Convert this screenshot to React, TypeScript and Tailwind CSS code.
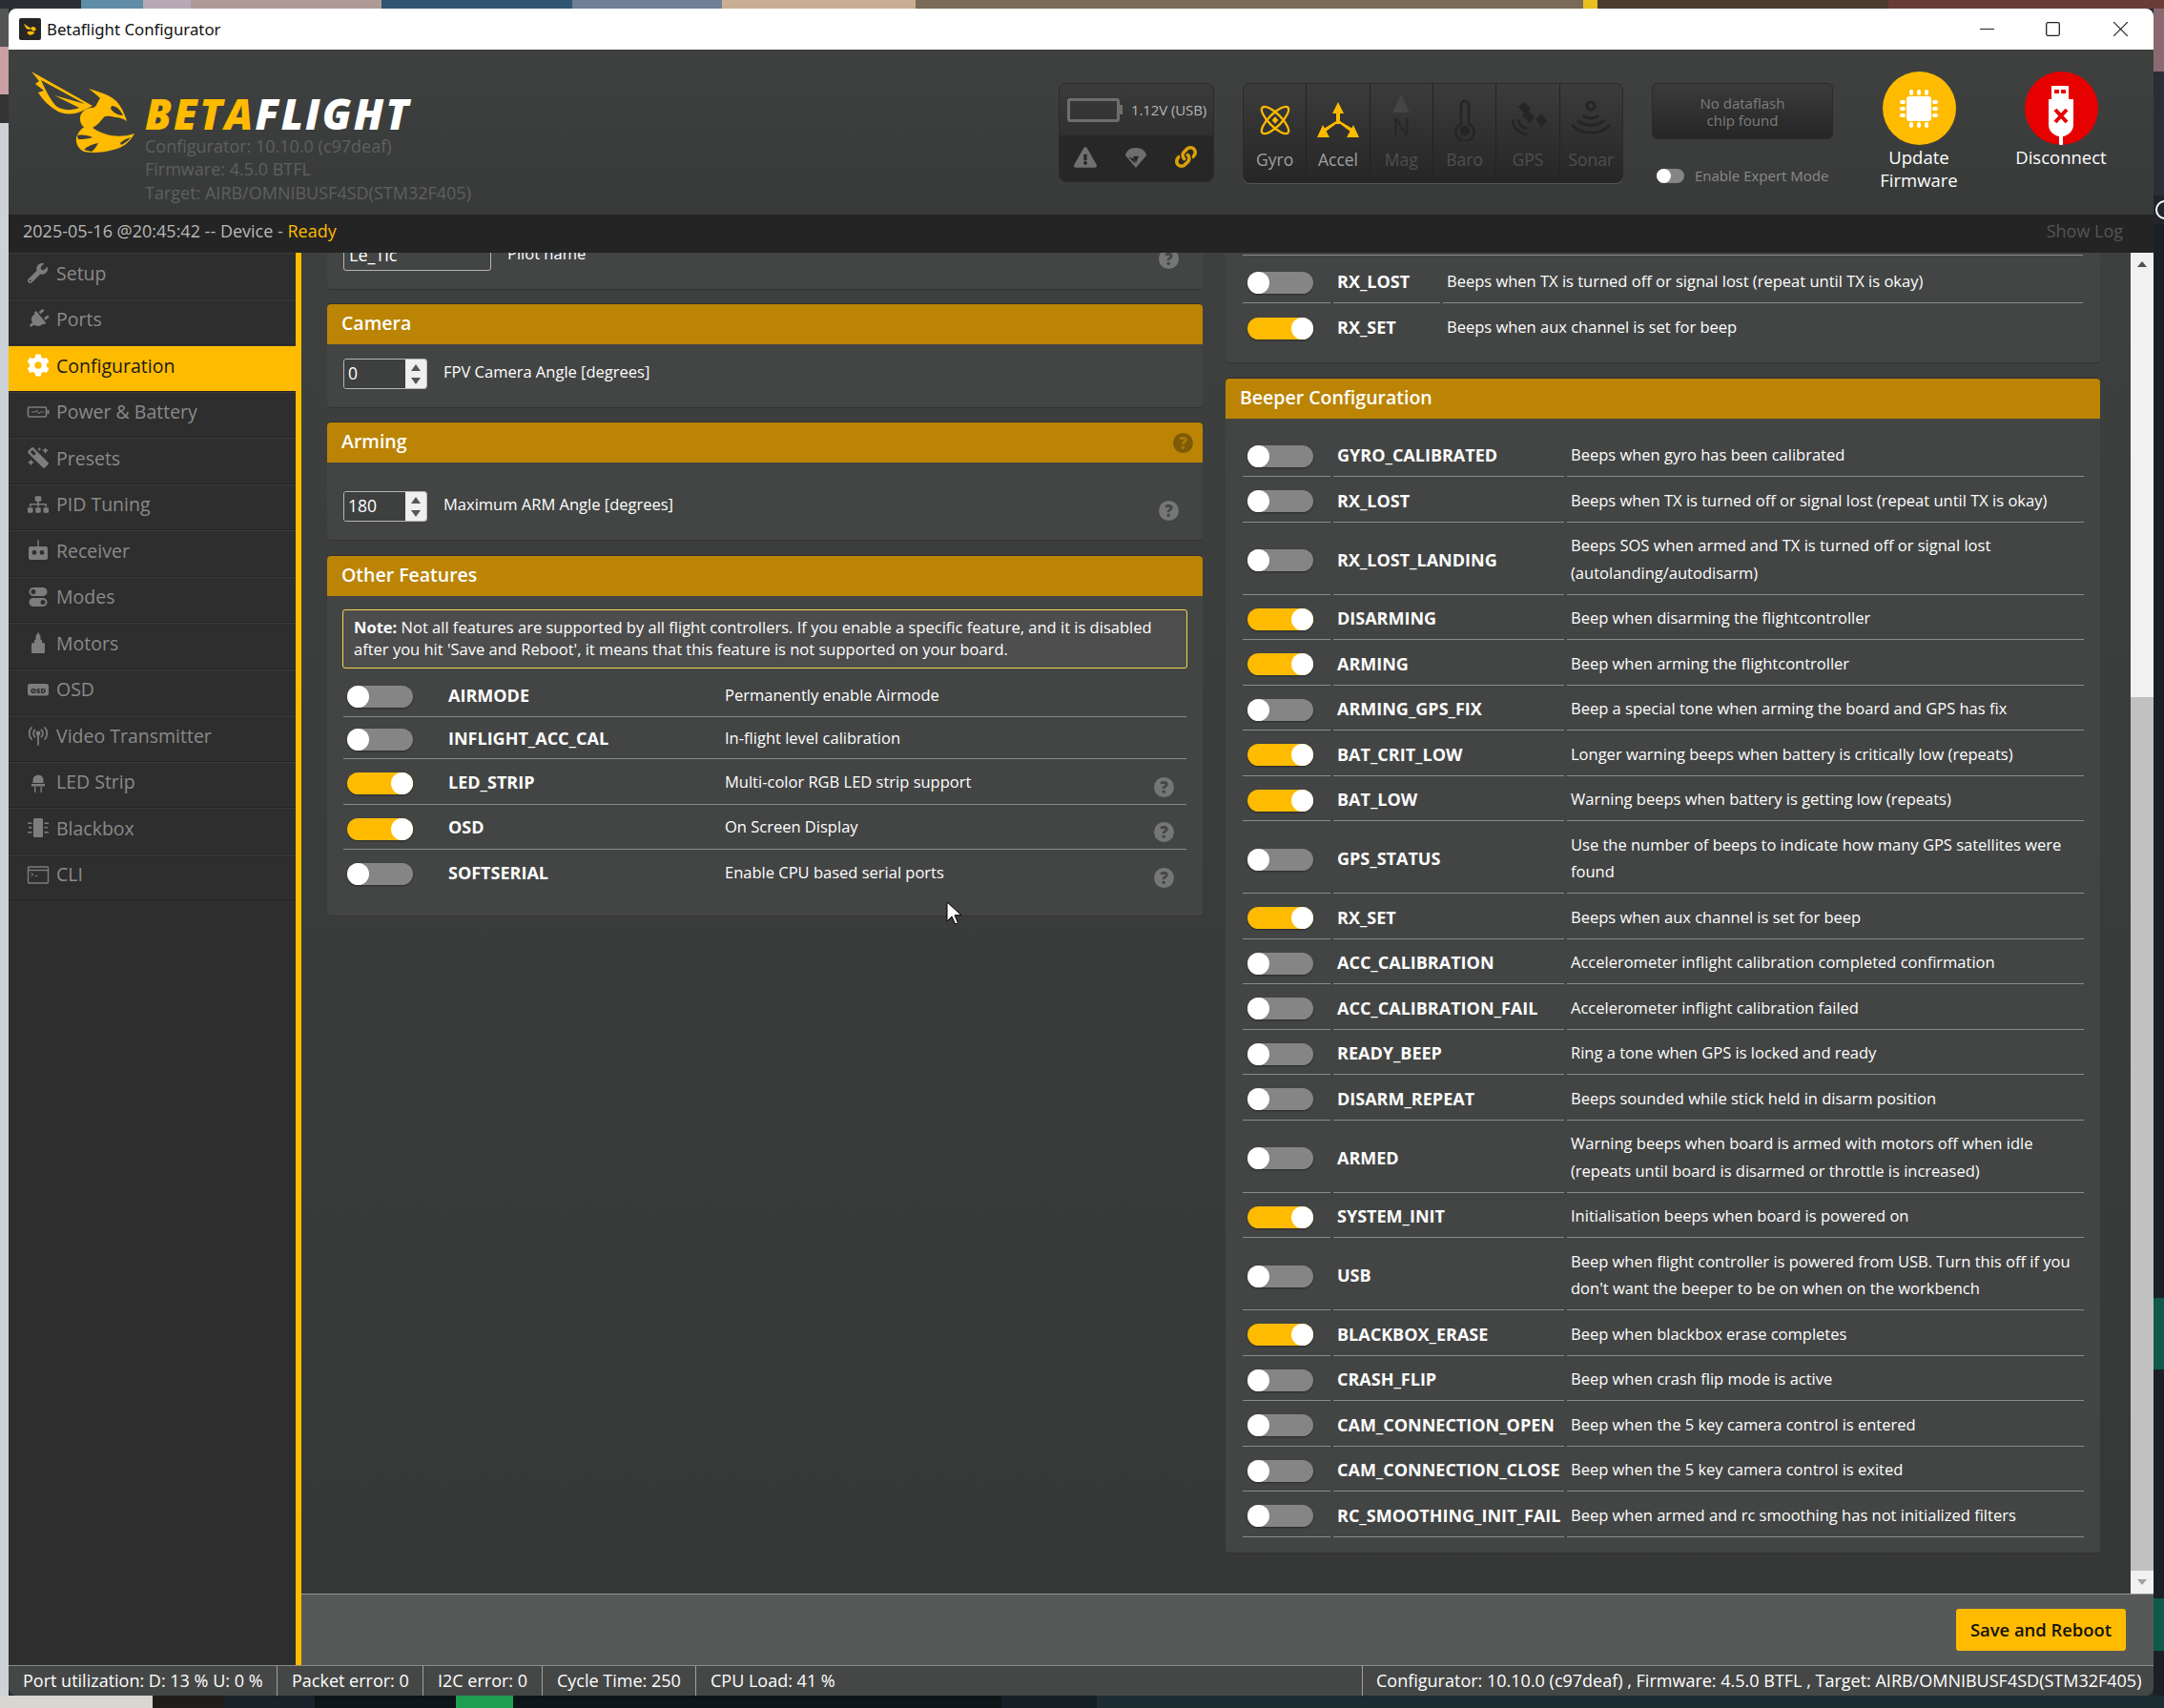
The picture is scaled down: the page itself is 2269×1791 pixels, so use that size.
import type { ReactNode } from 'react'
import { FaWrench, FaPlug, FaCog, FaMagic, FaSitemap, FaExclamationTriangle, FaLink } from 'react-icons/fa'

const topStrip = [
  ['w-[85px]', 'bg-[#2b2f35]'],
  ['w-[65px]', 'bg-[#5f8da6]'],
  ['w-[50px]', 'bg-[#b8a8b5]'],
  ['w-[200px]', 'bg-[#b09a98]'],
  ['w-[200px]', 'bg-[#2f5570]'],
  ['w-[157px]', 'bg-[#6d8094]'],
  ['w-[203px]', 'bg-[#c8ae92]'],
  ['w-[700px]', 'bg-[#7a6a58]'],
  ['w-[15px]', 'bg-[#e8c020]'],
  ['w-[305px]', 'bg-[#4a3a30]'],
  ['flex-1', 'bg-[#6a3c38]'],
]

const bottomStrip = [
  ['w-[160px]', 'bg-[#d9d6d0]'],
  ['w-[75px]', 'bg-[#201d1b]'],
  ['w-[95px]', 'bg-[#18222a]'],
  ['w-[148px]', 'bg-[#0c1518]'],
  ['w-[60px]', 'bg-[#1f9e50]'],
  ['w-[512px]', 'bg-[#0c1518]'],
  ['w-[100px]', 'bg-[#141f26]'],
  ['flex-1', 'bg-[#1e2c33]'],
]

function BatteryIcon() {
  return (
    <svg viewBox="0 0 24 24" className="w-[24px] h-[24px]" fill="none" stroke="currentColor" strokeWidth="1.6">
      <rect x="1.5" y="7" width="19" height="10" rx="1" />
      <path d="M22.5 10v4" strokeWidth="2" />
      <path d="M5 12h4l1.5-2 2 4 1.5-2h4" strokeWidth="1" />
    </svg>
  )
}

function RemoteIcon() {
  return (
    <svg viewBox="0 0 24 24" className="w-[24px] h-[24px]" fill="currentColor">
      <rect x="11.3" y="1" width="1.4" height="8" />
      <path fillRule="evenodd" d="M4 8h16a2 2 0 0 1 2 2v10a2 2 0 0 1-2 2H4a2 2 0 0 1-2-2V10a2 2 0 0 1 2-2zM8 12a2.4 2.4 0 1 0 0 4.8A2.4 2.4 0 0 0 8 12zm8 0a2.4 2.4 0 1 0 0 4.8 2.4 2.4 0 0 0 0-4.8z" />
    </svg>
  )
}

function ModesIcon() {
  return (
    <svg viewBox="0 0 24 24" className="w-[24px] h-[24px]" fill="currentColor">
      <path fillRule="evenodd" d="M7 2h10a4.5 4.5 0 0 1 0 9H7a4.5 4.5 0 0 1 0-9zm0 2a2.5 2.5 0 1 0 0 5 2.5 2.5 0 0 0 0-5z" />
      <path fillRule="evenodd" d="M7 13h10a4.5 4.5 0 0 1 0 9H7a4.5 4.5 0 0 1 0-9zm10 2a2.5 2.5 0 1 0 0 5 2.5 2.5 0 0 0 0-5z" />
    </svg>
  )
}

function MotorIcon() {
  return (
    <svg viewBox="0 0 24 24" className="w-[24px] h-[24px]" fill="currentColor">
      <path d="M12 1l2.5 4v4h1.5v3H8V9h1.5V5z" />
      <rect x="5" y="12" width="14" height="11" rx="1.5" />
    </svg>
  )
}

function OsdIcon() {
  return (
    <svg viewBox="0 0 24 24" className="w-[24px] h-[24px]">
      <rect x="1" y="6" width="22" height="12.5" rx="2.5" fill="currentColor" />
      <text x="12" y="15.5" textAnchor="middle" fontSize="7.5" fontWeight="800" fill="#2e2e2e">OSD</text>
    </svg>
  )
}

function VtxIcon() {
  return (
    <svg viewBox="0 0 24 24" className="w-[24px] h-[24px]" fill="none" stroke="currentColor" strokeWidth="1.8" strokeLinecap="round">
      <circle cx="12" cy="10" r="1.5" fill="currentColor" />
      <path d="M12 11v11" />
      <path d="M8.5 6.5a5 5 0 0 0 0 7M15.5 6.5a5 5 0 0 1 0 7M5 4a9 9 0 0 0 0 12M19 4a9 9 0 0 1 0 12" />
    </svg>
  )
}

function LedIcon() {
  return (
    <svg viewBox="0 0 24 24" className="w-[24px] h-[24px]" fill="currentColor">
      <path d="M6.5 10a5.5 5.5 0 0 1 11 0v3h-11z" />
      <rect x="5" y="14" width="14" height="2.5" />
      <rect x="8" y="17" width="1.4" height="6" />
      <rect x="14.5" y="17" width="1.4" height="6" />
    </svg>
  )
}

function BlackboxIcon() {
  return (
    <svg viewBox="0 0 24 24" className="w-[24px] h-[24px]" fill="currentColor">
      <rect x="7" y="2" width="10" height="20" rx="1.5" />
      <path d="M1 6.500h4.500v1.500H1zM2 11h3.500v1.500H2zM1 16h4.500v1.500H1zM18.500 6.500H23v1.500h-4.500zM18.500 11H22v1.500h-3.500zM18.500 16H23v1.500h-4.500z" />
    </svg>
  )
}

function CliIcon() {
  return (
    <svg viewBox="0 0 24 24" className="w-[24px] h-[24px]" fill="none" stroke="currentColor" strokeWidth="1.4">
      <rect x="1.5" y="4" width="21" height="17" rx="1" />
      <path d="M1.5 7.500h21" />
      <path d="M4.500 10.500l2.500 1.500-2.500 1.500M8.500 13.500h3" strokeWidth="1" />
    </svg>
  )
}

const tabs: { label: string; icon: ReactNode; active?: boolean }[] = [
  { label: 'Setup', icon: <FaWrench size={21} /> },
  { label: 'Ports', icon: <FaPlug size={22} className="rotate-[50deg]" /> },
  { label: 'Configuration', icon: <FaCog size={24} />, active: true },
  { label: 'Power & Battery', icon: <BatteryIcon /> },
  { label: 'Presets', icon: <FaMagic size={22} className="-scale-x-100" /> },
  { label: 'PID Tuning', icon: <FaSitemap size={22} /> },
  { label: 'Receiver', icon: <RemoteIcon /> },
  { label: 'Modes', icon: <ModesIcon /> },
  { label: 'Motors', icon: <MotorIcon /> },
  { label: 'OSD', icon: <OsdIcon /> },
  { label: 'Video Transmitter', icon: <VtxIcon /> },
  { label: 'LED Strip', icon: <LedIcon /> },
  { label: 'Blackbox', icon: <BlackboxIcon /> },
  { label: 'CLI', icon: <CliIcon /> },
]

const beepers: { name: string; on?: boolean; desc: ReactNode; tall?: boolean }[] = [
  { name: 'GYRO_CALIBRATED', desc: 'Beeps when gyro has been calibrated' },
  { name: 'RX_LOST', desc: 'Beeps when TX is turned off or signal lost (repeat until TX is okay)' },
  { name: 'RX_LOST_LANDING', tall: true, desc: <>Beeps SOS when armed and TX is turned off or signal lost<br />(autolanding/autodisarm)</> },
  { name: 'DISARMING', on: true, desc: 'Beep when disarming the flightcontroller' },
  { name: 'ARMING', on: true, desc: 'Beep when arming the flightcontroller' },
  { name: 'ARMING_GPS_FIX', desc: 'Beep a special tone when arming the board and GPS has fix' },
  { name: 'BAT_CRIT_LOW', on: true, desc: 'Longer warning beeps when battery is critically low (repeats)' },
  { name: 'BAT_LOW', on: true, desc: 'Warning beeps when battery is getting low (repeats)' },
  { name: 'GPS_STATUS', tall: true, desc: <>Use the number of beeps to indicate how many GPS satellites were<br />found</> },
  { name: 'RX_SET', on: true, desc: 'Beeps when aux channel is set for beep' },
  { name: 'ACC_CALIBRATION', desc: 'Accelerometer inflight calibration completed confirmation' },
  { name: 'ACC_CALIBRATION_FAIL', desc: 'Accelerometer inflight calibration failed' },
  { name: 'READY_BEEP', desc: 'Ring a tone when GPS is locked and ready' },
  { name: 'DISARM_REPEAT', desc: 'Beeps sounded while stick held in disarm position' },
  { name: 'ARMED', tall: true, desc: <>Warning beeps when board is armed with motors off when idle<br />(repeats until board is disarmed or throttle is increased)</> },
  { name: 'SYSTEM_INIT', on: true, desc: 'Initialisation beeps when board is powered on' },
  { name: 'USB', tall: true, desc: <>Beep when flight controller is powered from USB. Turn this off if you<br />don't want the beeper to be on when on the workbench</> },
  { name: 'BLACKBOX_ERASE', on: true, desc: 'Beep when blackbox erase completes' },
  { name: 'CRASH_FLIP', desc: 'Beep when crash flip mode is active' },
  { name: 'CAM_CONNECTION_OPEN', desc: 'Beep when the 5 key camera control is entered' },
  { name: 'CAM_CONNECTION_CLOSE', desc: 'Beep when the 5 key camera control is exited' },
  { name: 'RC_SMOOTHING_INIT_FAIL', desc: 'Beep when armed and rc smoothing has not initialized filters' },
]

const features = [
  { name: 'AIRMODE', desc: 'Permanently enable Airmode', h: 'h-[46px]' },
  { name: 'INFLIGHT_ACC_CAL', desc: 'In-flight level calibration', h: 'h-[44px]' },
  { name: 'LED_STRIP', desc: 'Multi-color RGB LED strip support', on: true, help: true, h: 'h-[48px]' },
  { name: 'OSD', desc: 'On Screen Display', on: true, help: true, h: 'h-[47px]' },
  { name: 'SOFTSERIAL', desc: 'Enable CPU based serial ports', help: true, h: 'h-[47px]', last: true },
]

function Toggle({ on }: { on?: boolean }) {
  return (
    <div className={`w-[69px] h-[23px] rounded-full flex shrink-0 shadow-[0_1px_2px_rgba(0,0,0,0.4)] ${on ? 'bg-[#ffbb00] justify-end' : 'bg-[#858585] justify-start'}`}>
      <div className="w-[23px] h-[23px] rounded-full bg-white" />
    </div>
  )
}

function Help({ dark }: { dark?: boolean }) {
  return (
    <div className={`w-[21px] h-[21px] rounded-full flex items-center justify-center text-[17px] font-extrabold leading-none shrink-0 ${dark ? 'bg-[#7d5a05] text-[#a87a08]' : 'bg-[#757776] text-[#454746]'}`}>?</div>
  )
}

function PanelHeader({ title, children }: { title: string; children?: ReactNode }) {
  return (
    <div className="h-[42px] bg-[#bb8404] rounded-t-[4px] flex items-center justify-between pl-[15px] pr-[10px] shadow-[0_-1px_0_#2f2f2f]">
      <span className="text-[19.5px] leading-[24px] font-semibold text-white mt-[-3px]">{title}</span>
      {children}
    </div>
  )
}

function NumberInput({ value }: { value: string }) {
  return (
    <div className="w-[88px] h-[32px] border border-[#b5b5b5] rounded-[3px] flex overflow-hidden shrink-0">
      <div className="flex-1 pl-[4px] text-[17.5px] leading-[28px] text-white bg-[#3e403f]">{value}</div>
      <div className="w-[22px] bg-[#efefef] flex flex-col items-center justify-center gap-[7px]">
        <div className="w-0 h-0 border-x-[5px] border-x-transparent border-b-[7px] border-b-[#555]" />
        <div className="w-0 h-0 border-x-[5px] border-x-transparent border-t-[7px] border-t-[#555]" />
      </div>
    </div>
  )
}

function BeeLogo() {
  return (
    <svg viewBox="0 0 125 110" className="w-[125px] h-[110px] shrink-0" fill="#ffbb00">
      <path fillRule="evenodd" d="M8 10L72 46L62 51C52 56 42 55 36 52C27 47 20 40 15 32L21 30L12 23L16 20ZM18 19C24 32 29 42 35 47C42 51 50 51 58 48L32 35L64 44Z" />
      <path d="M68 28C76 30 84 33 90 36C100 41 105 52 108 62C103 59 100 58 96 58C90 57 86 56 84 58C80 62 78 66 72 69C66 72 60 68 59 61C58 54 64 48 72 48C76 48 77 42 80 38C76 34 72 31 68 28Z" />
      <path fillRule="evenodd" d="M92 46C97 46 101 50 104 56C98 56 94 53 91 49Z" fill="#3a3c3b" />
      <path d="M55 79C58 71 63 67 69 66C74 71 80 74 87 76C94 78 104 79 116 75C111 84 104 90 94 92C84 95 72 96 63 94C57 91 54 85 55 79Z" />
      <path d="M56 77C62 76 68 77 72 79C66 81 60 81 57 81ZM63 92C67 88 72 86 78 85C76 89 74 92 71 94ZM101 85C104 82 108 80 112 79C109 83 106 85 102 87Z" fill="#3a3c3b" />
    </svg>
  )
}

function SensorCell({ label, active, children }: { label: string; active?: boolean; children: ReactNode }) {
  return (
    <div className="flex-1 flex flex-col items-center border-r border-r-[#232323] last:border-r-0">
      <div className="h-[53px] mt-[11px] flex items-center justify-center">{children}</div>
      <span className={`mt-[3px] text-[17.5px] leading-[24px] ${active ? 'text-[#a0a0a0]' : 'text-[#4f4f4f]'}`}>{label}</span>
    </div>
  )
}

function Header() {
  return (
    <div className="h-[173px] bg-gradient-to-b from-[#3f4140] to-[#383a39] flex items-start pr-[37px] shrink-0">
      <div className="mt-[13px] ml-[16px]"><BeeLogo /></div>
      <div className="ml-[2px] mt-[46px]">
        <div className="text-[44px] leading-[43px] font-extrabold italic tracking-[2.2px] whitespace-nowrap">
          <span className="text-[#ffbb00]">BETA</span><span className="text-white">FLIGHT</span>
        </div>
        <div className="text-[18px] leading-[24.3px] text-[#5e605f]">
          <div>Configurator: 10.10.0 (c97deaf)</div>
          <div>Firmware: 4.5.0 BTFL</div>
          <div>Target: AIRB/OMNIBUSF4SD(STM32F405)</div>
        </div>
      </div>

      <div className="ml-auto mt-[35px] w-[163px] h-[104px] rounded-[8px] border border-[#2a2a2a] overflow-hidden flex flex-col">
        <div className="h-[54px] bg-gradient-to-b from-[#3b3b3b] to-[#303030] flex items-center pl-[8px]">
          <div className="w-[55px] h-[25px] border-[3px] border-[#6e6e6e] rounded-[3px]" />
          <div className="w-[3px] h-[10px] bg-[#6e6e6e]" />
          <span className="ml-[9px] text-[15px] text-[#b5b5b5] whitespace-nowrap tracking-[-0.1px]">1.12V (USB)</span>
        </div>
        <div className="flex-1 bg-[#272727] flex items-center justify-around pr-[2px] pb-[3px]">
          <FaExclamationTriangle size={24} className="text-[#707070]" />
          <svg viewBox="0 0 24 24" className="w-[24px] h-[24px]" fill="#6e6e6e">
            <path d="M12 2C6 2 1.5 5.5 1 10l11 13L23 10c-.5-4.5-5-8-11-8zM4 11.5l6 2 1.2 5zM20 11.5l-6 2-1.2 5zM9 11.2c1.8-.5 4.2-.5 6 0l-3 6.5z" />
          </svg>
          <FaLink size={23} className="text-[#d9a008]" />
        </div>
      </div>

      <div className="ml-[30px] mt-[35px] w-[399px] h-[105px] rounded-[8px] border border-[#2a2a2a] bg-gradient-to-b from-[#3c3c3c] to-[#262626] flex overflow-hidden shadow-[0_1px_0_#555]">
        <SensorCell label="Gyro" active>
          <svg viewBox="0 0 36 36" className="w-[34px] h-[34px]" fill="none" stroke="#ffbb00" strokeWidth="2.4">
            <ellipse cx="18" cy="18" rx="7" ry="20" transform="rotate(-45 18 18)" />
            <ellipse cx="18" cy="18" rx="7" ry="20" transform="rotate(45 18 18)" />
            <path d="M18 14l3.5 4-3.5 4-3.5-4z" fill="#ffbb00" stroke="none" />
          </svg>
        </SensorCell>
        <SensorCell label="Accel" active>
          <svg viewBox="0 0 44 38" className="w-[44px] h-[38px]" fill="#ffbb00">
            <path d="M22 0l6 12h-4v11h-4V12h-4z" />
            <path d="M21 22L9 31l-2.200-3L20 20zM23 22l12 9 2.200-3L24 20z" />
            <path d="M0 37l6-13 7 13zM44 37l-6-13-7 13z" />
          </svg>
        </SensorCell>
        <SensorCell label="Mag">
          <div className="flex flex-col items-center mt-[-4px]">
            <div className="w-0 h-0 border-x-[9px] border-x-transparent border-b-[19px] border-b-[#454545]" />
            <span className="text-[25px] leading-[30px] text-[#272727] font-['Liberation_Sans',sans-serif]">N</span>
          </div>
        </SensorCell>
        <SensorCell label="Baro">
          <svg viewBox="0 0 24 44" className="w-[24px] h-[44px]" fill="none" stroke="#252525" strokeWidth="2.5">
            <path d="M8 26V6a4 4 0 0 1 8 0v20a9.5 9.5 0 1 1-8 0z" />
            <circle cx="12" cy="33" r="4" fill="#252525" />
          </svg>
        </SensorCell>
        <SensorCell label="GPS">
          <svg viewBox="0 0 40 40" className="w-[40px] h-[40px]" fill="#252525">
            <path d="M10 6l6-5 7 7-6 6zM28 19l6-6 6 8-6 6z" />
            <path d="M19 9l8 8-5 6-8-8z" />
            <path d="M3 20a16 16 0 0 0 16 16l1-3a13 13 0 0 1-14-14zM9 20a10 10 0 0 0 10 10l1-3a7 7 0 0 1-8-8z" />
          </svg>
        </SensorCell>
        <SensorCell label="Sonar">
          <svg viewBox="0 0 44 40" className="w-[44px] h-[40px]" fill="none" stroke="#252525" strokeWidth="3">
            <circle cx="22" cy="5" r="4" />
            <path d="M14 15c4 4 12 4 16 0M8 20c7 7 21 7 28 0M2 25c10 11 30 11 40 0" />
          </svg>
        </SensorCell>
      </div>

      <div className="ml-[30px] mt-[35px] w-[190px] flex flex-col">
        <div className="h-[59px] rounded-[6px] border border-[#2a2a2a] bg-gradient-to-b from-[#3b3b3b] to-[#262626] flex items-center justify-center text-center text-[15px] leading-[18px] text-[#7d7d7d]">
          No dataflash<br />chip found
        </div>
        <div className="flex items-center mt-[27px] pl-[5px]">
          <div className="w-[29px] h-[15px] rounded-full bg-[#858585] flex">
            <div className="w-[15px] h-[15px] rounded-full bg-white" />
          </div>
          <span className="ml-[11px] text-[15px] text-[#8a8a8a] whitespace-nowrap">Enable Expert Mode</span>
        </div>
      </div>

      <div className="ml-[30px] mt-[23px] w-[120px] flex flex-col items-center text-white text-[18.5px] leading-[24px] text-center">
        <div className="w-[77px] h-[77px] rounded-full bg-[#ffbb00] flex items-center justify-center mb-[1px]">
          <svg viewBox="0 0 42 42" className="w-[42px] h-[42px]" fill="#fff">
            <rect x="8" y="8" width="26" height="26" rx="3" />
            <rect x="11" y="1" width="4" height="6" rx="2" /><rect x="19" y="1" width="4" height="6" rx="2" /><rect x="27" y="1" width="4" height="6" rx="2" />
            <rect x="11" y="35" width="4" height="6" rx="2" /><rect x="19" y="35" width="4" height="6" rx="2" /><rect x="27" y="35" width="4" height="6" rx="2" />
            <rect x="1" y="12" width="6" height="4" rx="2" /><rect x="1" y="19" width="6" height="4" rx="2" /><rect x="1" y="26" width="6" height="4" rx="2" />
            <rect x="35" y="12" width="6" height="4" rx="2" /><rect x="35" y="19" width="6" height="4" rx="2" /><rect x="35" y="26" width="6" height="4" rx="2" />
          </svg>
        </div>
        Update<br />Firmware
      </div>

      <div className="ml-[29px] mt-[23px] w-[120px] flex flex-col items-center text-white text-[18.5px] leading-[24px] text-center">
        <div className="w-[77px] h-[77px] rounded-full bg-[#e60000] overflow-hidden flex justify-center mb-[1px]">
          <svg viewBox="0 0 30 68" className="w-[30px] h-[68px] mt-[15px]">
            <path fillRule="evenodd" fill="#fff" d="M5 0h18v14h-18zM8 4v4h5V4zM15 4v4h5V4z" />
            <path fill="#fff" d="M2 14h26v27c0 6-5 11-11 12v15h-4V53C7 52 2 47 2 41z" />
            <path d="M9 25l12 13M21 25L9 38" stroke="#e60000" strokeWidth="4" fill="none" />
          </svg>
        </div>
        Disconnect
      </div>
    </div>
  )
}

function BeeperRow({ name, on, desc, tall, labelWidth, descWidth }: { name: string; on?: boolean; desc: ReactNode; tall?: boolean; labelWidth: string; descWidth: string }) {
  return (
    <div className={`flex gap-[3px] ${tall ? 'h-[76px]' : 'h-[47.5px]'}`}>
      <div className="w-[92px] shrink-0 border-b border-b-[#8a8c8b] flex items-center pl-[5px] pt-[5px]"><Toggle on={on} /></div>
      <div className={`${labelWidth} shrink-0 border-b border-b-[#8a8c8b] flex items-center pl-[4px] pt-[4px] text-[18px] font-bold text-white whitespace-nowrap`}>{name}</div>
      <div className={`${descWidth} shrink-0 border-b border-b-[#8a8c8b] flex items-center pl-[4px] pt-[3px] text-[16.5px] leading-[28.5px] text-white whitespace-nowrap`}><div>{desc}</div></div>
    </div>
  )
}

export default function App() {
  return (
    <div className="w-[2269px] h-[1791px] flex flex-col overflow-hidden bg-[#1e2c33] font-['Open_Sans',sans-serif]">
      <div className="h-[9px] flex shrink-0">
        {topStrip.map(([w, bg], i) => <div key={i} className={`${w} ${bg}`} />)}
      </div>

      <div className="flex-1 flex min-h-0">
        <div className="w-[9px] shrink-0 flex flex-col">
          <div className="h-[40px] bg-[#555]" />
          <div className="h-[50px] bg-[#c9a0a3]" />
          <div className="h-[30px] bg-[#333]" />
          <div className="flex-1 bg-[#ccd2d6]" />
        </div>

        <div className="w-[2249px] shrink-0 flex flex-col rounded-t-[8px] rounded-b-[8px] overflow-hidden relative">
          {/* title bar */}
          <div className="h-[43px] bg-white flex items-center pl-[11px] shrink-0">
            <div className="w-[23px] h-[23px] bg-[#262626] rounded-[2px] flex items-center justify-center">
              <svg viewBox="0 0 20 20" className="w-[18px] h-[18px]" fill="#ffbb00">
                <path d="M2 3l9 6-3 1-3-1zM10 9a3 3 0 0 1 6 2l-3 1zM6 13c2-2 5-1 9 0-2 4-8 5-9 0z" />
              </svg>
            </div>
            <span className="ml-[6px] text-[16.8px] text-[#111] font-['Noto_Sans',sans-serif]">Betaflight Configurator</span>
            <div className="ml-auto flex items-center pr-[27px]">
              <svg viewBox="0 0 15 15" className="w-[15px] h-[15px]" stroke="#222" strokeWidth="1.2"><path d="M0 7.5h15" /></svg>
              <svg viewBox="0 0 15 15" className="ml-[54px] w-[15px] h-[15px]" stroke="#222" strokeWidth="1.3" fill="none"><rect x="0.7" y="0.7" width="13.6" height="13.6" rx="1.5" /></svg>
              <svg viewBox="0 0 15 15" className="ml-[56px] w-[15px] h-[15px]" stroke="#222" strokeWidth="1.2"><path d="M0 0l15 15M15 0L0 15" /></svg>
            </div>
          </div>

          <Header />

          {/* log bar */}
          <div className="h-[40px] bg-[#242424] flex items-center justify-between pl-[15px] pr-[32px] pb-[5px] text-[18px] shrink-0">
            <span className="text-[#b8b8b8]">2025-05-16 @20:45:42 -- Device - <span className="text-[#ffbb00]">Ready</span></span>
            <span className="text-[#555]">Show Log</span>
          </div>

          <div className="flex-1 flex min-h-0">
            {/* sidebar */}
            <div className="w-[301px] shrink-0 bg-[#2e2e2e] flex flex-col">
              {tabs.map((t) => (
                <div key={t.label} className={`h-[48.5px] shrink-0 flex items-center border-b border-b-[#242424] shadow-[inset_0_1px_0_#3a3a3a] pb-[5px] ${t.active ? 'bg-[#ffbb00] text-[#1a1a1a]' : 'text-[#8a8a8a]'}`}>
                  <div className={`w-[50px] flex items-center justify-center pl-[11px] ${t.active ? 'text-white' : 'text-[#7d7d7d]'}`}>{t.icon}</div>
                  <span className="text-[19.5px]">{t.label}</span>
                </div>
              ))}
            </div>
            <div className="w-[6px] shrink-0 bg-[#ffbb00]" />

            <div className="flex-1 flex flex-col min-w-0">
              <div className="flex-1 flex min-h-0 bg-gradient-to-b from-[#3e403f] to-[#363837]">
                <div className="flex-1 flex overflow-hidden pl-[27px] gap-[24px]">
                  {/* left column */}
                  <div className="w-[918px] shrink-0 flex flex-col gap-[16px]">
                    <div className="h-[60px] -mt-[22px] shrink-0 bg-[#434544] rounded-b-[4px] flex items-start pl-[17px] pr-[25px] pt-[9px] shadow-[0_1px_0_#333]">
                      <div className="w-[155px] h-[32px] border border-[#b5b5b5] rounded-[3px] pl-[5px] text-[18px] leading-[28px] text-white">Le_Tic</div>
                      <span className="ml-[17px] text-[16.5px] text-white leading-[28px]">Pilot name</span>
                      <div className="ml-auto mt-[9px]"><Help /></div>
                    </div>

                    <div className="shrink-0 bg-[#434544] rounded-[4px] shadow-[0_1px_0_#333]">
                      <PanelHeader title="Camera" />
                      <div className="h-[66px] pt-[15px] pl-[17px] flex items-start">
                        <NumberInput value="0" />
                        <span className="ml-[17px] text-[16.5px] text-white leading-[28px]">FPV Camera Angle [degrees]</span>
                      </div>
                    </div>

                    <div className="shrink-0 bg-[#434544] rounded-[4px] shadow-[0_1px_0_#333]">
                      <PanelHeader title="Arming"><Help dark /></PanelHeader>
                      <div className="h-[81px] pt-[30px] pl-[17px] pr-[25px] flex items-start">
                        <NumberInput value="180" />
                        <span className="ml-[17px] text-[16.5px] text-white leading-[28px]">Maximum ARM Angle [degrees]</span>
                        <div className="ml-auto mt-[10px]"><Help /></div>
                      </div>
                    </div>

                    <div className="shrink-0 mt-[1px] bg-[#434544] rounded-[4px] shadow-[0_1px_0_#333] pb-[22px]">
                      <PanelHeader title="Other Features" />
                      <div className="mx-[16px] mt-[14px] h-[62px] border border-[#f3d750] rounded-[3px] bg-[#4d4d4d] px-[11px] py-[7px] text-[16.5px] leading-[22.5px] text-white whitespace-nowrap">
                        <strong>Note:</strong> Not all features are supported by all flight controllers. If you enable a specific feature, and it is disabled<br />after you hit 'Save and Reboot', it means that this feature is not supported on your board.
                      </div>
                      <div className="mx-[17px] mt-[5px]">
                        {features.map((f) => (
                          <div key={f.name} className={`${f.h} flex items-center ${f.last ? '' : 'border-b border-b-[#8a8c8b]'}`}>
                            <div className="w-[110px] pl-[4px] shrink-0 mt-[4px]"><Toggle on={f.on} /></div>
                            <div className="w-[290px] shrink-0 text-[18px] font-bold text-white mt-[1px]">{f.name}</div>
                            <div className="flex-1 text-[16.5px] text-white mt-[1px]">{f.desc}</div>
                            {f.help && <div className="mr-[13px] mt-[11px]"><Help /></div>}
                          </div>
                        ))}
                      </div>
                    </div>
                  </div>

                  {/* right column */}
                  <div className="w-[917px] shrink-0 flex flex-col gap-[17px]">
                    <div className="h-[115px] shrink-0 bg-[#434544] rounded-b-[4px] px-[18px] shadow-[0_1px_0_#333]">
                      <div className="mt-[2px] h-[3.5px] border-t border-t-[#8a8c8b]" />
                      <BeeperRow name="RX_LOST" desc="Beeps when TX is turned off or signal lost (repeat until TX is okay)" labelWidth="w-[112px]" descWidth="w-[671px]" />
                      <div className="flex gap-[3px] h-[47.5px]">
                        <div className="w-[92px] shrink-0 flex items-center pl-[5px] pt-[5px]"><Toggle on /></div>
                        <div className="w-[112px] shrink-0 flex items-center pl-[4px] pt-[4px] text-[18px] font-bold text-white">RX_SET</div>
                        <div className="flex items-center pl-[4px] pt-[3px] text-[16.5px] text-white">Beeps when aux channel is set for beep</div>
                      </div>
                    </div>

                    <div className="shrink-0 bg-[#434544] rounded-[4px] shadow-[0_1px_0_#333]">
                      <PanelHeader title="Beeper Configuration" />
                      <div className="px-[18px] pt-[13.5px] pb-[16.5px]">
                        {beepers.map((b) => (
                          <BeeperRow key={b.name} {...b} labelWidth="w-[242px]" descWidth="w-[542px]" />
                        ))}
                      </div>
                    </div>
                  </div>
                </div>

                {/* scrollbar */}
                <div className="w-[24px] shrink-0 bg-[#f1f1f1] flex flex-col items-center">
                  <div className="h-[24px] shrink-0 flex items-center justify-center">
                    <div className="w-0 h-0 border-x-[5px] border-x-transparent border-b-[6px] border-b-[#505050]" />
                  </div>
                  <div className="h-[442px] shrink-0" />
                  <div className="w-full h-[916px] shrink-0 bg-[#c1c1c1]" />
                  <div className="flex-1 flex items-center justify-center">
                    <div className="w-0 h-0 border-x-[5px] border-x-transparent border-t-[6px] border-t-[#a0a0a0]" />
                  </div>
                </div>
              </div>

              <div className="h-[75px] shrink-0 bg-[#575958] border-t border-t-[#959695] flex items-center justify-end pr-[29px]">
                <div className="w-[178px] h-[44px] bg-[#ffbb00] rounded-[3px] flex items-center justify-center text-[18.4px] font-semibold text-[#111]">Save and Reboot</div>
              </div>
            </div>
          </div>

          {/* status bar */}
          <div className="h-[32px] shrink-0 bg-[#454746] border-t border-t-[#8a8c8b] flex items-center text-[18px] text-white whitespace-nowrap">
            <div className="w-[282px] h-full pl-[15px] border-r border-r-[#a0a0a0] flex items-center">Port utilization: D: 13 % U: 0 %</div>
            <div className="w-[153px] h-full pl-[15px] border-r border-r-[#a0a0a0] flex items-center">Packet error: 0</div>
            <div className="w-[125px] h-full pl-[15px] border-r border-r-[#a0a0a0] flex items-center">I2C error: 0</div>
            <div className="w-[161px] h-full pl-[15px] border-r border-r-[#a0a0a0] flex items-center">Cycle Time: 250</div>
            <div className="flex-1 h-full pl-[15px] flex items-center">CPU Load: 41 %</div>
            <div className="w-[830px] h-full pl-[14px] border-l border-l-[#a0a0a0] flex items-center">Configurator: 10.10.0 (c97deaf) , Firmware: 4.5.0 BTFL , Target: AIRB/OMNIBUSF4SD(STM32F405)</div>
          </div>

          {/* mouse cursor */}
          <svg viewBox="0 0 18 26" className="absolute left-[983px] top-[936px] w-[18px] h-[26px]">
            <path d="M1 1v20l5-5 3.5 8 3-1.3-3.5-8h7z" fill="#fff" stroke="#000" strokeWidth="1" />
          </svg>
        </div>

        <div className="flex-1 flex flex-col">
          <div className="h-[66px] bg-[#8a6a70]" />
          <div className="h-[130px] bg-[#2b2e36]" />
          <div className="h-[30px] bg-[#22252b]">
            <div className="w-[20px] h-[20px] rounded-full border-2 border-white mt-[5px] ml-[2px]" />
          </div>
          <div className="flex-1 bg-[#1a2026]" />
          <div className="h-[75px] bg-[#0f5a4a]" />
          <div className="h-[240px] bg-[#1a2026]" />
          <div className="h-[55px] bg-[#0f5a4a]" />
          <div className="h-[47px] bg-[#1a2026]" />
        </div>
      </div>

      <div className="h-[13px] flex shrink-0">
        {bottomStrip.map(([w, bg], i) => <div key={i} className={`${w} ${bg}`} />)}
      </div>
    </div>
  )
}
